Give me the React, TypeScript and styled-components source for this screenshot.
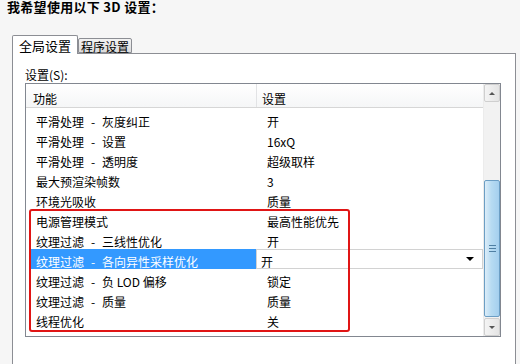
import React from 'react';
import styled, { createGlobalStyle } from 'styled-components';

const GlobalStyle = createGlobalStyle`
  html, body {
    margin: 0;
    padding: 0;
    background: #f6f6f6;
    overflow: hidden;
  }
  * {
    box-sizing: border-box;
  }
  body {
    font-family: 'Noto Sans CJK SC', 'DejaVu Sans', sans-serif;
    font-size: 12px;
    color: #000;
  }
`;

const Page = styled.div`
  width: 520px;
  height: 364px;
  overflow: hidden;
`;

const TitleBar = styled.div`
  height: 35px;
  padding-left: 7px;
`;

const Title = styled.h1`
  margin: 0;
  font-size: 13px;
  line-height: 13px;
  font-weight: bold;
  letter-spacing: 0.3px;
`;

const TabStrip = styled.div`
  display: flex;
  align-items: flex-end;
  height: 18px;
  margin-left: 12px;
`;

const Tab = styled.div<{ $active?: boolean }>`
  height: ${p => (p.$active ? 19 : 15)}px;
  margin-bottom: ${p => (p.$active ? -1 : 0)}px;
  padding: 0 ${p => (p.$active ? 6 : 2)}px;
  border: 1px solid #8c8e94;
  border-bottom: ${p => (p.$active ? 'none' : '1px solid #8c8e94')};
  border-radius: 2px 2px 0 0;
  background: ${p =>
    p.$active ? '#fff' : 'linear-gradient(#f3f3f3, #dcdcdc)'};
  line-height: ${p => (p.$active ? 20 : 16)}px;
  font-size: ${p => (p.$active ? 13 : 12)}px;
  position: relative;
  z-index: 1;
`;

const Panel = styled.div`
  margin-left: 12px;
  width: 504px;
  height: 320px;
  border: 1px solid #8c8e94;
  background: #fff;
  padding: 12px 0 0 12px;
`;

const FieldLabel = styled.div`
  height: 12px;
  line-height: 18px;
`;

const ListBox = styled.div`
  position: relative;
  margin-top: 5px;
  width: 476px;
  height: 254px;
  border: 1px solid #828790;
  display: flex;
`;

const ListContent = styled.div`
  flex: 1;
  display: flex;
  flex-direction: column;
`;

const HeaderRow = styled.div`
  display: grid;
  grid-template-columns: 230px 1fr;
  height: 24px;
  border-bottom: 1px solid #d6d6d6;
  background: linear-gradient(#ffffff, #f5f6f7);
`;

const HeaderCell = styled.div<{ $divider?: boolean }>`
  padding-top: 7px;
  line-height: 16px;
  padding-left: ${p => (p.$divider ? 5 : 7)}px;
  border-left: ${p => (p.$divider ? '1px solid #e2e3e5' : 'none')};
`;

const Rows = styled.div`
  padding-top: 1px;
  display: flex;
  flex-direction: column;
`;

const Row = styled.div`
  display: grid;
  grid-template-columns: 230px 1fr;
  height: 20px;
`;

const NameCell = styled.div<{ $selected?: boolean }>`
  margin-left: 5px;
  padding: 6px 0 0 5px;
  line-height: 14px;
  background: ${p => (p.$selected ? '#3399ff' : 'transparent')};
  color: ${p => (p.$selected ? '#fff' : '#000')};
  white-space: nowrap;
`;

const Sep = styled.span`
  display: inline-block;
  width: 18px;
  text-align: center;
`;

const ValueCell = styled.div`
  padding: 6px 0 0 11px;
  line-height: 14px;
  white-space: nowrap;
`;

const Combo = styled.div`
  display: flex;
  align-items: center;
  justify-content: space-between;
  height: 20px;
  padding: 0 8px 0 4px;
  border: 1px solid #d2d2d2;
  background: #fff;
`;

const ComboText = styled.span`
  padding-top: 5px;
  line-height: 14px;
`;

const ComboArrow = styled.span`
  width: 0;
  height: 0;
  border-left: 4px solid transparent;
  border-right: 4px solid transparent;
  border-top: 4px solid #000;
`;

const ScrollBar = styled.div`
  width: 17px;
  display: flex;
  flex-direction: column;
  background: #f2f2f2;
  border-left: 1px solid #ececec;
`;

const ScrollButton = styled.div`
  height: 18px;
  border: 1px solid #cfcfcf;
  border-radius: 2px;
  background: linear-gradient(90deg, #f4f4f4, #e4e4e4);
  display: flex;
  align-items: center;
  justify-content: center;
`;

const ArrowGlyph = styled.span<{ $up?: boolean }>`
  width: 0;
  height: 0;
  border-left: 3px solid transparent;
  border-right: 3px solid transparent;
  ${p =>
    p.$up ? 'border-bottom: 3px solid #555;' : 'border-top: 3px solid #555;'}
`;

const Track = styled.div`
  flex: 1;
  display: flex;
  flex-direction: column;
`;

const Thumb = styled.div<{ $top: number; $height: number }>`
  margin-top: ${p => p.$top}px;
  height: ${p => p.$height}px;
  border: 1px solid #6c9ec4;
  border-radius: 2px;
  background: linear-gradient(90deg, #dcedf9, #b7dbf2 45%, #a4cfee);
  display: flex;
  flex-direction: column;
  align-items: center;
  justify-content: center;
  gap: 2px;
`;

const Grip = styled.span`
  width: 7px;
  height: 1px;
  background: #4f7fa3;
`;

const Highlight = styled.div`
  position: absolute;
  left: 3px;
  top: 125px;
  width: 321px;
  height: 123px;
  border: 2px solid #e01515;
  border-radius: 3px;
  pointer-events: none;
`;

type Item = { name: string[]; value: string; selected?: boolean };

const items: Item[] = [
  { name: ['平滑处理', '灰度纠正'], value: '开' },
  { name: ['平滑处理', '设置'], value: '16xQ' },
  { name: ['平滑处理', '透明度'], value: '超级取样' },
  { name: ['最大预渲染帧数'], value: '3' },
  { name: ['环境光吸收'], value: '质量' },
  { name: ['电源管理模式'], value: '最高性能优先' },
  { name: ['纹理过滤', '三线性优化'], value: '开' },
  { name: ['纹理过滤', '各向异性采样优化'], value: '开', selected: true },
  { name: ['纹理过滤', '负 LOD 偏移'], value: '锁定' },
  { name: ['纹理过滤', '质量'], value: '质量' },
  { name: ['线程优化'], value: '关' },
];

const App: React.FC = () => (
  <Page>
    <GlobalStyle />
    <TitleBar>
      <Title>我希望使用以下 3D 设置：</Title>
    </TitleBar>
    <TabStrip>
      <Tab $active>全局设置</Tab>
      <Tab>程序设置</Tab>
    </TabStrip>
    <Panel>
      <FieldLabel>设置(S):</FieldLabel>
      <ListBox>
        <ListContent>
          <HeaderRow>
            <HeaderCell>功能</HeaderCell>
            <HeaderCell $divider>设置</HeaderCell>
          </HeaderRow>
          <Rows>
            {items.map((it, i) => (
              <Row key={i}>
                <NameCell $selected={it.selected}>
                  {it.name[0]}
                  {it.name[1] && (
                    <>
                      <Sep>-</Sep>
                      {it.name[1]}
                    </>
                  )}
                </NameCell>
                {it.selected ? (
                  <Combo>
                    <ComboText>{it.value}</ComboText>
                    <ComboArrow />
                  </Combo>
                ) : (
                  <ValueCell>{it.value}</ValueCell>
                )}
              </Row>
            ))}
          </Rows>
        </ListContent>
        <ScrollBar>
          <ScrollButton>
            <ArrowGlyph $up />
          </ScrollButton>
          <Track>
            <Thumb $top={78} $height={137}>
              <Grip />
              <Grip />
              <Grip />
            </Thumb>
          </Track>
          <ScrollButton>
            <ArrowGlyph />
          </ScrollButton>
        </ScrollBar>
        <Highlight />
      </ListBox>
    </Panel>
  </Page>
);

export default App;
